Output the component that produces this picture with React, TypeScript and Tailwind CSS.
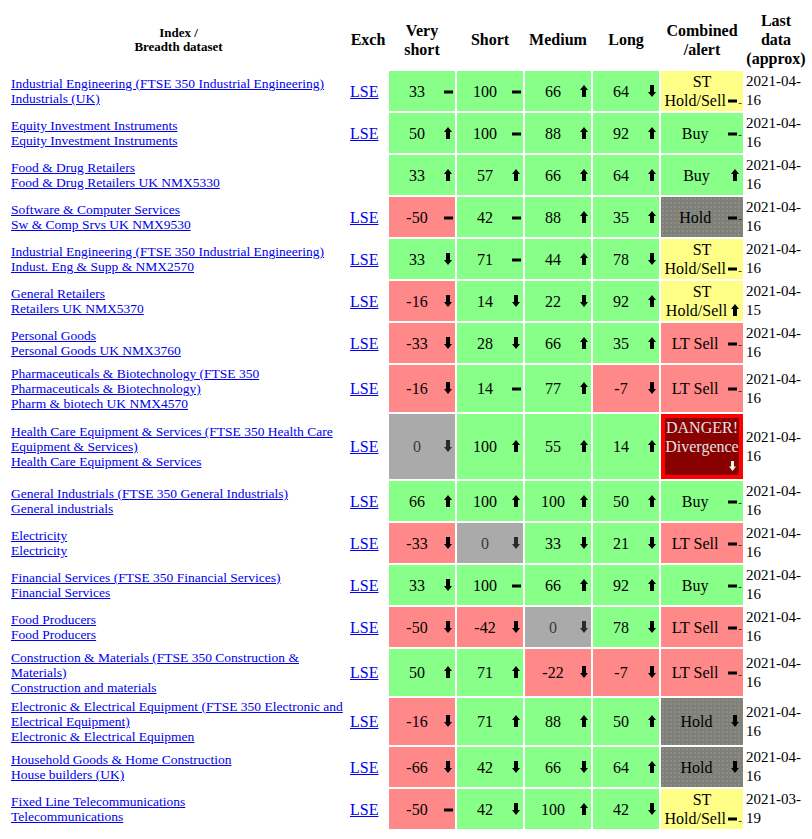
import React from 'react';

type Dir = 'up' | 'down' | 'flat';
type Tone = 'g' | 'r' | 'x';
type Val = [string, Dir, Tone];
type Alert = 'buy' | 'sth' | 'lts' | 'hold' | 'danger';

type Row = {
  a: string;
  b: string;
  exch?: boolean;
  vals: Val[];
  alert: [Alert, Dir];
  date: string;
};

const rows: Row[] = [
  { a: 'Industrial Engineering (FTSE 350 Industrial Engineering)', b: 'Industrials (UK)', exch: true, vals: [['33', 'flat', 'g'], ['100', 'flat', 'g'], ['66', 'up', 'g'], ['64', 'down', 'g']], alert: ['sth', 'flat'], date: '2021-04-16' },
  { a: 'Equity Investment Instruments', b: 'Equity Investment Instruments', exch: true, vals: [['50', 'up', 'g'], ['100', 'flat', 'g'], ['88', 'up', 'g'], ['92', 'up', 'g']], alert: ['buy', 'flat'], date: '2021-04-16' },
  { a: 'Food & Drug Retailers', b: 'Food & Drug Retailers UK NMX5330', vals: [['33', 'up', 'g'], ['57', 'up', 'g'], ['66', 'up', 'g'], ['64', 'up', 'g']], alert: ['buy', 'up'], date: '2021-04-16' },
  { a: 'Software & Computer Services', b: 'Sw & Comp Srvs UK NMX9530', exch: true, vals: [['-50', 'flat', 'r'], ['42', 'flat', 'g'], ['88', 'up', 'g'], ['35', 'up', 'g']], alert: ['hold', 'flat'], date: '2021-04-16' },
  { a: 'Industrial Engineering (FTSE 350 Industrial Engineering)', b: 'Indust. Eng & Supp & NMX2570', exch: true, vals: [['33', 'down', 'g'], ['71', 'flat', 'g'], ['44', 'up', 'g'], ['78', 'down', 'g']], alert: ['sth', 'flat'], date: '2021-04-16' },
  { a: 'General Retailers', b: 'Retailers UK NMX5370', exch: true, vals: [['-16', 'down', 'r'], ['14', 'down', 'g'], ['22', 'down', 'g'], ['92', 'up', 'g']], alert: ['sth', 'up'], date: '2021-04-15' },
  { a: 'Personal Goods', b: 'Personal Goods UK NMX3760', exch: true, vals: [['-33', 'down', 'r'], ['28', 'down', 'g'], ['66', 'up', 'g'], ['35', 'up', 'g']], alert: ['lts', 'flat'], date: '2021-04-16' },
  { a: 'Pharmaceuticals & Biotechnology (FTSE 350 Pharmaceuticals & Biotechnology)', b: 'Pharm & biotech UK NMX4570', exch: true, vals: [['-16', 'down', 'r'], ['14', 'flat', 'g'], ['77', 'up', 'g'], ['-7', 'down', 'r']], alert: ['lts', 'flat'], date: '2021-04-16' },
  { a: 'Health Care Equipment & Services (FTSE 350 Health Care Equipment & Services)', b: 'Health Care Equipment & Services', exch: true, vals: [['0', 'down', 'x'], ['100', 'up', 'g'], ['55', 'up', 'g'], ['14', 'up', 'g']], alert: ['danger', 'down'], date: '2021-04-16' },
  { a: 'General Industrials (FTSE 350 General Industrials)', b: 'General industrials', exch: true, vals: [['66', 'up', 'g'], ['100', 'up', 'g'], ['100', 'up', 'g'], ['50', 'up', 'g']], alert: ['buy', 'flat'], date: '2021-04-16' },
  { a: 'Electricity', b: 'Electricity', exch: true, vals: [['-33', 'down', 'r'], ['0', 'down', 'x'], ['33', 'down', 'g'], ['21', 'down', 'g']], alert: ['lts', 'flat'], date: '2021-04-16' },
  { a: 'Financial Services (FTSE 350 Financial Services)', b: 'Financial Services', exch: true, vals: [['33', 'down', 'g'], ['100', 'flat', 'g'], ['66', 'up', 'g'], ['92', 'up', 'g']], alert: ['buy', 'flat'], date: '2021-04-16' },
  { a: 'Food Producers', b: 'Food Producers', exch: true, vals: [['-50', 'down', 'r'], ['-42', 'down', 'r'], ['0', 'down', 'x'], ['78', 'down', 'g']], alert: ['lts', 'flat'], date: '2021-04-16' },
  { a: 'Construction & Materials (FTSE 350 Construction & Materials)', b: 'Construction and materials', exch: true, vals: [['50', 'up', 'g'], ['71', 'up', 'g'], ['-22', 'down', 'r'], ['-7', 'down', 'r']], alert: ['lts', 'flat'], date: '2021-04-16' },
  { a: 'Electronic & Electrical Equipment (FTSE 350 Electronic and Electrical Equipment)', b: 'Electronic & Electrical Equipmen', exch: true, vals: [['-16', 'down', 'r'], ['71', 'up', 'g'], ['88', 'up', 'g'], ['50', 'up', 'g']], alert: ['hold', 'down'], date: '2021-04-16' },
  { a: 'Household Goods & Home Construction', b: 'House builders (UK)', exch: true, vals: [['-66', 'down', 'r'], ['42', 'down', 'g'], ['66', 'down', 'g'], ['64', 'up', 'g']], alert: ['hold', 'down'], date: '2021-04-16' },
  { a: 'Fixed Line Telecommunications', b: 'Telecommunications', exch: true, vals: [['-50', 'flat', 'r'], ['42', 'down', 'g'], ['100', 'up', 'g'], ['42', 'down', 'g']], alert: ['sth', 'flat'], date: '2021-03-19' },
];

const toneBg: Record<Tone, string> = {
  g: 'bg-[#88ff88]',
  r: 'bg-[#ff8888]',
  x: 'bg-[#aaaaaa] text-[#3a3a3a]',
};

function Glyph({ dir, color = '#000' }: { dir: Dir; color?: string }) {
  if (dir === 'flat') {
    return (
      <svg width="10" height="14" viewBox="0 0 10 14" className="block">
        <rect x="0" y="5.5" width="9" height="3" fill={color} />
      </svg>
    );
  }
  const d =
    dir === 'up'
      ? 'M4 0 L8 5 L6 5 L6 12 L2 12 L2 5 L0 5 Z'
      : 'M4 12 L8 7 L6 7 L6 0 L2 0 L2 7 L0 7 Z';
  return (
    <svg width="10" height="14" viewBox="0 0 10 14" className="block">
      <path d={d} fill={color} />
    </svg>
  );
}

function ValCell({ v }: { v: Val }) {
  const [n, dir, tone] = v;
  return (
    <td className={`${toneBg[tone]} p-px text-center align-middle`}>
      <span className="float-right mt-[3px]">
        <Glyph dir={dir} color={tone === 'x' ? '#2a2a2a' : '#000'} />
      </span>
      {n}
    </td>
  );
}

function AlertCell({ alert }: { alert: [Alert, Dir] }) {
  const [kind, dir] = alert;
  if (kind === 'danger') {
    return (
      <td className="border-4 border-[#ff0000] bg-[#880000] p-0 text-center align-middle text-[#e4e4e4]">
        DANGER!
        <br />
        Divergence
        <div className="flex h-[19px] items-center justify-end pr-[3px]">
          <svg width="7" height="10" viewBox="0 0 7 10">
            <path d="M3.5 10 L7 5.5 L5 5.5 L5 0 L2 0 L2 5.5 L0 5.5 Z" fill="#f4f4f4" />
          </svg>
        </div>
      </td>
    );
  }
  const bg =
    kind === 'buy'
      ? 'bg-[#88ff88]'
      : kind === 'lts'
        ? 'bg-[#ff8888]'
        : kind === 'sth'
          ? 'bg-[#ffff88]'
          : 'bg-[#7f8178] bg-[image:radial-gradient(circle,#a6a89f_0.5px,transparent_0.8px)] bg-[length:4px_4px]';
  const icon =
    dir === 'flat' ? (
      <span className="float-right mt-[3px] flex h-[14px] items-center">
        <Glyph dir="flat" />
        <span className="mt-[2px] text-[11px] leading-[11px] text-[#222]">-</span>
      </span>
    ) : (
      <span className="float-right mt-[3px] mr-[1px]">
        <Glyph dir={dir} />
      </span>
    );
  return (
    <td className={`${bg} p-px text-center align-middle`}>
      {kind === 'sth' ? (
        <>
          ST
          <br />
          Hold/Sell
          {icon}
        </>
      ) : (
        <>
          {kind === 'buy' ? 'Buy' : kind === 'lts' ? 'LT Sell' : 'Hold'}
          {icon}
        </>
      )}
    </td>
  );
}

export default function App() {
  return (
    <div className="min-h-screen bg-white pl-2 pt-2 font-['Liberation_Serif',serif] text-[16px] leading-[19px] text-black">
      <table className="w-[801px] table-fixed border-separate border-spacing-[2px]">
        <colgroup>
          <col className="w-[337px]" />
          <col className="w-[38px]" />
          <col className="w-[66px]" />
          <col className="w-[66px]" />
          <col className="w-[66px]" />
          <col className="w-[66px]" />
          <col className="w-[82px]" />
          <col className="w-[62px]" />
        </colgroup>
        <thead>
          <tr>
            <th className="p-px text-center align-middle text-[13px] leading-[14px] font-bold">
              Index /
              <br />
              Breadth dataset
            </th>
            <th className="p-px text-center align-middle font-bold">Exch</th>
            <th className="p-px text-center align-middle font-bold">Very short</th>
            <th className="p-px text-center align-middle font-bold">Short</th>
            <th className="p-px text-center align-middle font-bold">Medium</th>
            <th className="p-px text-center align-middle font-bold">Long</th>
            <th className="p-px text-center align-middle font-bold">Combined /alert</th>
            <th className="p-px text-center align-middle font-bold">Last data (approx)</th>
          </tr>
        </thead>
        <tbody>
          {rows.map((r, i) => (
            <tr key={i}>
              <td className="p-px text-left align-middle text-[13.5px] leading-[15px]">
                <a href="#" className="text-[#0000ee] underline">
                  {r.a}
                </a>
                <br />
                <a href="#" className="text-[#0000ee] underline">
                  {r.b}
                </a>
              </td>
              <td className="p-px text-left align-middle">
                {r.exch && (
                  <a href="#" className="text-[#0000ee] underline">
                    LSE
                  </a>
                )}
              </td>
              {r.vals.map((v, j) => (
                <ValCell key={j} v={v} />
              ))}
              <AlertCell alert={r.alert} />
              <td className="p-px text-left align-middle text-[15px] leading-[19px]">{r.date}</td>
            </tr>
          ))}
        </tbody>
      </table>
    </div>
  );
}
